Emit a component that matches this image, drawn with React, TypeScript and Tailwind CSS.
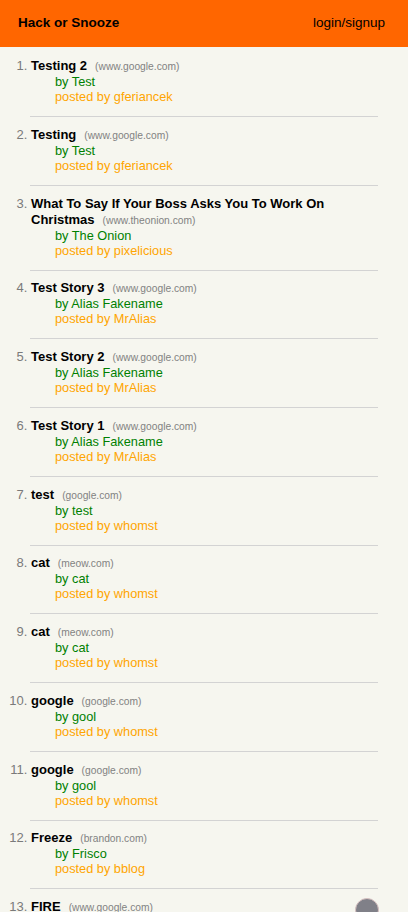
import React from 'react';

type Story = {
  title: string;
  domain: string;
  author: string;
  user: string;
};

const STORIES: Story[] = [
  { title: 'Testing 2', domain: 'www.google.com', author: 'Test', user: 'gferiancek' },
  { title: 'Testing', domain: 'www.google.com', author: 'Test', user: 'gferiancek' },
  {
    title: 'What To Say If Your Boss Asks You To Work On Christmas',
    domain: 'www.theonion.com',
    author: 'The Onion',
    user: 'pixelicious',
  },
  { title: 'Test Story 3', domain: 'www.google.com', author: 'Alias Fakename', user: 'MrAlias' },
  { title: 'Test Story 2', domain: 'www.google.com', author: 'Alias Fakename', user: 'MrAlias' },
  { title: 'Test Story 1', domain: 'www.google.com', author: 'Alias Fakename', user: 'MrAlias' },
  { title: 'test', domain: 'google.com', author: 'test', user: 'whomst' },
  { title: 'cat', domain: 'meow.com', author: 'cat', user: 'whomst' },
  { title: 'cat', domain: 'meow.com', author: 'cat', user: 'whomst' },
  { title: 'google', domain: 'google.com', author: 'gool', user: 'whomst' },
  { title: 'google', domain: 'google.com', author: 'gool', user: 'whomst' },
  { title: 'Freeze', domain: 'brandon.com', author: 'Frisco', user: 'bblog' },
  { title: 'FIRE', domain: 'www.google.com', author: 'fire', user: 'bblog' },
];

export default function App() {
  return (
    <div className="relative h-[912px] overflow-hidden bg-[#f6f6ef] font-['Liberation_Sans',Arial,sans-serif] text-black">
      <nav className="flex h-[47px] items-center justify-between bg-[#ff6600] pl-[18px] pr-[23px] text-[13.5px]">
        <a href="#" className="font-bold">Hack or Snooze</a>
        <a href="#">login/signup</a>
      </nav>

      <ol className="list-decimal pl-[31px] pr-[30px] pt-[11px] marker:text-[#7a7a7a]">
        {STORIES.map((s, i) => (
          <li key={i} className="text-[13px] leading-[15px]">
            <div className="leading-[16px]">
              <a href="#" className="font-bold">{s.title}</a>
              <small className="ml-[8px] text-[10.25px] leading-none text-[#828282]">({s.domain})</small>
            </div>
            <div className="pl-[24px] text-[12.75px] text-[#008000]">by {s.author}</div>
            <div className="pl-[24px] text-[12.75px] text-[#ffa500]">posted by {s.user}</div>
            <hr className="-ml-px mb-[9.75px] mt-[12px] border-[#d3d3d3]" />
          </li>
        ))}
      </ol>

      {/* floating button, cut off by the bottom edge */}
      <button className="absolute left-[355px] top-[898px] h-[24px] w-[24px] rounded-full border border-[#d8c2c2] bg-[#808088]" />
    </div>
  );
}
